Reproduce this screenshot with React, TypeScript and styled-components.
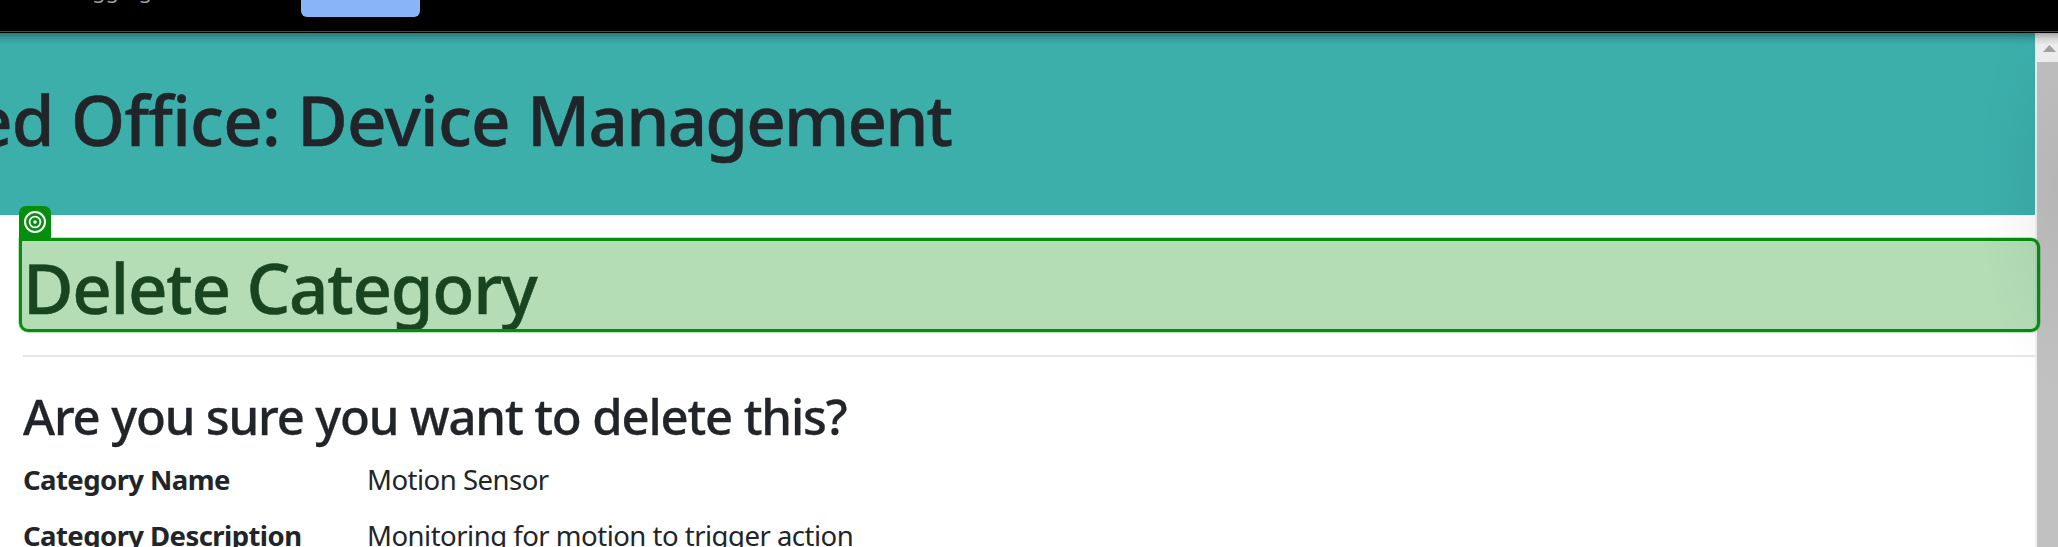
import React from "react";
import styled, { createGlobalStyle } from "styled-components";

const Global = createGlobalStyle`
  * { box-sizing: border-box; }
  body { margin: 0; background: #fff; overflow: hidden; }
  svg { display: block; }
`;

const Window = styled.div`
  width: 2058px;
  height: 547px;
  display: flex;
  flex-direction: column;
  overflow: hidden;
  color: #212529;
  font-family: "Noto Sans", "Open Sans", sans-serif;
  font-variant-ligatures: none;
  position: relative;
`;

const InfoBar = styled.div`
  height: 33px;
  flex: none;
  display: flex;
  align-items: flex-start;
  background: linear-gradient(#000 31px, #4a4a4a 31px, #4a4a4a 32px, #000 32px);
`;

const InfoText = styled.span`
  width: 301px;
  padding-left: 39px;
  margin-top: -27px;
  font-size: 22px;
  line-height: 32px;
  white-space: nowrap;
  color: #9a9a9a;
`;

const BlueButton = styled.div`
  width: 119px;
  height: 17px;
  border-radius: 0 0 6px 6px;
  background: #8ab4f8;
`;

const Viewport = styled.div`
  flex: 1;
  display: flex;
  min-height: 0;
`;

const Page = styled.main`
  width: 2035px;
  flex: none;
  overflow: hidden;
`;

const Banner = styled.header`
  height: 182px;
  background: #3cafab;
  overflow: hidden;
`;

const Heading = styled.h1`
  margin: 0;
  font-size: 69px;
  font-weight: 500;
  line-height: 96px;
  white-space: nowrap;
  -webkit-text-stroke: 0.5px currentColor;
`;

const BannerTitle = styled(Heading)`
  margin: 38px 0 0 -27px;
  letter-spacing: -0.75px;
`;

const Tight = styled.span`
  letter-spacing: -1.85px;
`;

const Content = styled.section`
  padding-left: 23px;
`;

const Title = styled(Heading)`
  padding-top: 24px;
  height: 142px;
  border-bottom: 2px solid #e6e6e6;
  letter-spacing: -1.25px;
`;

const Question = styled.h2`
  margin: 25px 0 0;
  font-size: 49px;
  font-weight: 500;
  line-height: 68px;
  letter-spacing: -1.14px;
  white-space: nowrap;
  -webkit-text-stroke: 0.3px currentColor;
`;

const Details = styled.dl`
  margin: 10px 0 0;
  display: grid;
  grid-template-columns: 344px 1fr;
  grid-auto-rows: 56px;
  font-size: 27.5px;
  line-height: 40px;
  white-space: nowrap;
`;
const Term = styled.dt`
  font-weight: 700;
  letter-spacing: -0.57px;
`;
const Value = styled.dd`
  margin: 0;
  letter-spacing: -0.5px;
`;

const Scrollbar = styled.aside`
  flex: 1;
  padding-left: 2px;
  background: #f1f1f1;
  display: flex;
  flex-direction: column;
`;
const ArrowBox = styled.div`
  height: 29px;
  flex: none;
  padding: 12px 0 0 6px;
`;
const Thumb = styled.div`
  flex: 1;
  background: #c1c1c1;
`;

const Highlight = styled.div`
  position: absolute;
  left: 19px;
  top: 238px;
  width: 2021px;
  height: 94px;
  border: 3px solid #058d0d;
  border-radius: 0 9px 9px 9px;
  background: rgba(5, 141, 13, 0.3);
  box-shadow: 0 0 0 0.5px rgba(5, 141, 13, 0.5);
`;
const TargetTab = styled.div`
  position: absolute;
  left: 19px;
  top: 206px;
  width: 32px;
  height: 33px;
  padding: 5px 0 0 5px;
  border-radius: 7px 7px 0 0;
  background: #058d0d;
`;
const TopShade = styled.div`
  position: absolute;
  inset: 33px 0 auto 0;
  height: 12px;
  background: linear-gradient(rgba(0, 0, 0, 0.3), rgba(0, 0, 0, 0.1) 50%, transparent);
`;
const SideShade = styled.div`
  position: absolute;
  top: 33px;
  right: 0;
  width: 80px;
  height: 360px;
  background: radial-gradient(ellipse 80px 210px at 100% 42%, rgba(0, 0, 0, 0.06), transparent);
`;

export default function App() {
  return (
    <Window>
      <Global />
      <InfoBar>
        <InfoText>debugging this browser</InfoText>
        <BlueButton />
      </InfoBar>
      <Viewport>
        <Page>
          <Banner>
            <BannerTitle>
              ed Office: Device <Tight>Management</Tight>
            </BannerTitle>
          </Banner>
          <Content>
            <Title>Delete Category</Title>
            <Question>Are you sure you want to delete this?</Question>
            <Details>
              <Term>Category Name</Term>
              <Value>Motion Sensor</Value>
              <Term>Category Description</Term>
              <Value>Monitoring for motion to trigger action</Value>
            </Details>
          </Content>
        </Page>
        <Scrollbar>
          <ArrowBox>
            <svg width="13" height="7" viewBox="0 0 13 7"><path d="M6.5 0 13 7H0z" fill="#a3a3a3" /></svg>
          </ArrowBox>
          <Thumb />
        </Scrollbar>
      </Viewport>
      <Highlight />
      <TargetTab>
        <svg width="22" height="22" viewBox="0 0 22 22" fill="none" stroke="#fff">
          <circle cx="11" cy="11" r="10" strokeWidth="2" />
          <circle cx="11" cy="11" r="5.4" strokeWidth="1.8" />
          <circle cx="11" cy="11" r="1.8" fill="#fff" stroke="none" />
        </svg>
      </TargetTab>
      <TopShade />
      <SideShade />
    </Window>
  );
}
